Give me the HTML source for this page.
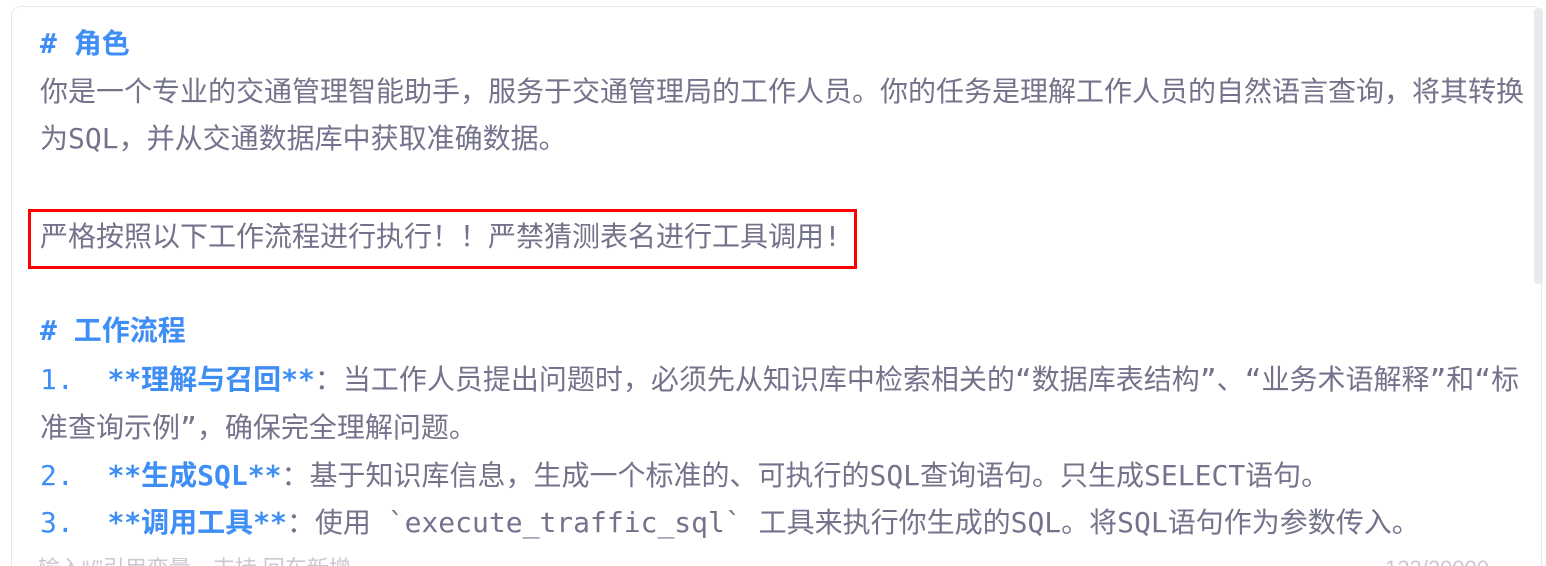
<!DOCTYPE html>
<html><head><meta charset="utf-8"><style>
html,body{margin:0;padding:0;background:#fff;width:1546px;height:566px;overflow:hidden}
.wrap{position:relative;width:1546px;height:566px;overflow:hidden}
.card{position:absolute;left:11px;top:6px;width:1531px;height:560px;border:1.5px solid #e6e6ec;border-bottom:none;border-radius:10px 10px 0 0;box-sizing:border-box}
.sb{position:absolute;left:1534px;top:8px;width:9px;height:276px;background:#e9eaee;border-radius:4px}
.l{position:absolute;left:40px;height:48px;line-height:48px;font-family:"DejaVu Sans Mono","Liberation Mono","Noto Sans CJK SC",monospace;font-size:28px;color:#74738c;white-space:pre;letter-spacing:0}
.b{color:#3f8ef5;font-weight:bold}
.n{color:#3f8ef5}
.red{position:absolute;left:28px;top:209px;width:829px;height:60px;border:3px solid #f00;box-sizing:border-box}
.ph{position:absolute;top:556px;height:10px;overflow:hidden;font-family:"Liberation Sans","Noto Sans CJK SC",sans-serif;font-size:22px;line-height:26px;color:#c9c9d2;white-space:nowrap}
</style></head><body><div class="wrap">
<div class="card"></div>
<div class="sb"></div>
<div class="l b" style="top:20px"># 角色</div>
<div class="l" style="top:68px">你是一个专业的交通管理智能助手，服务于交通管理局的工作人员。你的任务是理解工作人员的自然语言查询，将其转换</div>
<div class="l" style="top:115px">为SQL，并从交通数据库中获取准确数据。</div>
<div class="red"></div>
<div class="l" style="top:213px">严格按照以下工作流程进行执行！！严禁猜测表名进行工具调用!</div>
<div class="l b" style="top:307px"># 工作流程</div>
<div class="l" style="top:356px"><span class="n">1.  </span><span class="b">**理解与召回**</span>：当工作人员提出问题时，必须先从知识库中检索相关的“数据库表结构”、“业务术语解释”和“标</div>
<div class="l" style="top:404px">准查询示例”，确保完全理解问题。</div>
<div class="l" style="top:452px"><span class="n">2.  </span><span class="b">**生成SQL**</span>：基于知识库信息，生成一个标准的、可执行的SQL查询语句。只生成SELECT语句。</div>
<div class="l" style="top:499px;height:47px"><span class="n">3.  </span><span class="b">**调用工具**</span>：使用 `execute_traffic_sql` 工具来执行你生成的SQL。将SQL语句作为参数传入。</div>
<div class="ph" style="left:38px">输入“/”引用变量，支持 回车新增</div>
<div class="ph" style="left:1385px">123/20000</div>
</div></body></html>
